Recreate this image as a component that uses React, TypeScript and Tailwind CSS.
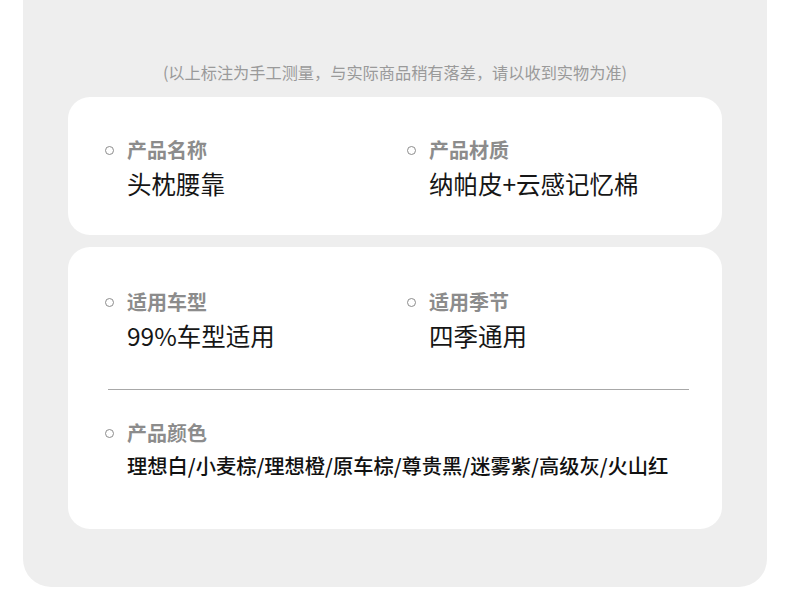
const font = { fontFamily: '"Noto Sans CJK SC", "Noto Sans", sans-serif' };

function Label({ text }: { text: string }) {
  return (
    <div className="flex items-center h-[24px]">
      <span className="w-[9px] h-[9px] rounded-full border-[1.5px] border-[#8c8c8c] ml-[37px] mr-[13px]" />
      <span className="text-[20px] leading-[24px] font-bold text-[#8c8c8c]">{text}</span>
    </div>
  );
}

function Field({ label, value }: { label: string; value: string }) {
  return (
    <div className="w-[302px]">
      <Label text={label} />
      <div className="mt-[7px] pl-[59px] text-[24.5px] leading-[30px] text-[#161616] whitespace-nowrap">{value}</div>
    </div>
  );
}

export default function App() {
  return (
    <div className="bg-white min-h-[594px] w-[790px]" style={font}>
      <div className="mx-[23px] w-[744px] h-[587px] bg-[#eeeeee] rounded-b-[28px] pt-[62px]">
        <p className="text-center text-[16.2px] leading-[20px] text-[#9a9a9a]">
          (以上标注为手工测量，与实际商品稍有落差，请以收到实物为准)
        </p>

        <div className="mx-[45px] mt-[15px] flex flex-col gap-[12px]">
          <div className="bg-white rounded-[22px] h-[138px] pt-[41px] flex">
            <Field label="产品名称" value="头枕腰靠" />
            <Field label="产品材质" value="纳帕皮+云感记忆棉" />
          </div>

          <div className="bg-white rounded-[22px] h-[282px] pt-[43px]">
            <div className="flex">
              <Field label="适用车型" value="99%车型适用" />
              <Field label="适用季节" value="四季通用" />
            </div>
            <div className="ml-[40px] mr-[33px] mt-[38px] h-px bg-[#a8a8a8]" />
            <div className="mt-[31px]">
              <Label text="产品颜色" />
              <div className="mt-[7px] pl-[59px] text-[20.25px] leading-[28px] font-medium text-[#111111] whitespace-nowrap">
                理想白/小麦棕/理想橙/原车棕/尊贵黑/迷雾紫/高级灰/火山红
              </div>
            </div>
          </div>
        </div>
      </div>
    </div>
  );
}
